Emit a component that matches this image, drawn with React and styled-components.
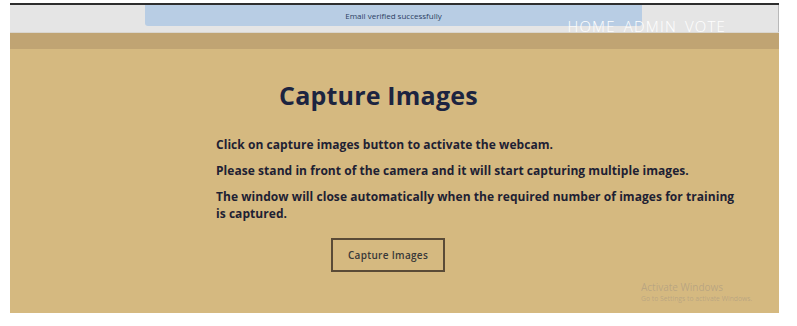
import React from "react";
import styled, { createGlobalStyle } from "styled-components";

const GlobalStyle = createGlobalStyle`
  html, body {
    margin: 0;
    padding: 0;
    background: #ffffff;
  }
  body {
    font-family: "Open Sans", "Liberation Sans", sans-serif;
  }
`;

const Frame = styled.div`
  position: relative;
  margin: 3px 0 0 10px;
  width: 769px;
  height: 310px;
  border-top: 2px solid #2e2e2e;
  box-sizing: border-box;
  background: #d5b980;
  overflow: hidden;
`;

const Header = styled.header`
  height: 27px;
  background: #e5e5e5;
  border-right: 1px solid #b9b9b9;
  display: flex;
  justify-content: flex-end;
  align-items: flex-end;
  padding-right: 52px;
`;

const Nav = styled.nav`
  display: flex;
  gap: 8px;
  position: relative;
  z-index: 2;
  transform: translateY(2px);
`;

const NavLink = styled.a`
  color: #ffffff;
  font-size: 15px;
  font-weight: 300;
  letter-spacing: 1.2px;
  line-height: 16px;
  text-decoration: none;
`;

const Band = styled.div`
  height: 16px;
  background: #c0a473;
  border-top: 1px solid #d9d6cf;
`;

const Toast = styled.div`
  position: absolute;
  top: 0;
  left: 135px;
  width: 497px;
  height: 21px;
  background: #b8cde4;
  border-radius: 0 0 3px 3px;
  color: #2c3e63;
  font-size: 8px;
  display: flex;
  align-items: center;
  justify-content: center;
  z-index: 1;
`;

const Main = styled.main`
  padding: 29px 0 0 206px;
`;

const Title = styled.h1`
  margin: 0 0 24px 63px;
  font-size: 25px;
  font-weight: 700;
  letter-spacing: 0.2px;
  color: #1c2440;
  line-height: 34px;
`;

const Text = styled.p`
  margin: 0 0 9px;
  width: 530px;
  font-size: 12px;
  font-weight: 700;
  letter-spacing: 0.05px;
  line-height: 17px;
  color: #1e2133;
`;

const CaptureButton = styled.button`
  margin: 7px 0 0 115px;
  width: 114px;
  height: 34px;
  background: transparent;
  border: 2px solid #5a4b37;
  font-family: "Open Sans", "Liberation Sans", sans-serif;
  font-size: 10px;
  font-weight: 600;
  letter-spacing: 0.3px;
  color: #383838;
  cursor: pointer;
`;

const Watermark = styled.div`
  position: absolute;
  left: 631px;
  top: 276px;
  color: rgba(150, 140, 130, 0.45);
`;

const WatermarkTitle = styled.div`
  font-size: 10px;
  line-height: 13px;
`;

const WatermarkSub = styled.div`
  font-size: 6.8px;
  line-height: 9px;
`;

export default function App() {
  return (
    <>
      <GlobalStyle />
      <Frame>
        <Toast>Email verified successfully</Toast>
        <Header>
          <Nav>
            <NavLink href="#">HOME</NavLink>
            <NavLink href="#">ADMIN</NavLink>
            <NavLink href="#">VOTE</NavLink>
          </Nav>
        </Header>
        <Band />
        <Main>
          <Title>Capture Images</Title>
          <Text>Click on capture images button to activate the webcam.</Text>
          <Text>
            Please stand in front of the camera and it will start capturing
            multiple images.
          </Text>
          <Text>
            The window will close automatically when the required number of
            images for training is captured.
          </Text>
          <CaptureButton>Capture Images</CaptureButton>
        </Main>
        <Watermark>
          <WatermarkTitle>Activate Windows</WatermarkTitle>
          <WatermarkSub>Go to Settings to activate Windows.</WatermarkSub>
        </Watermark>
      </Frame>
    </>
  );
}
